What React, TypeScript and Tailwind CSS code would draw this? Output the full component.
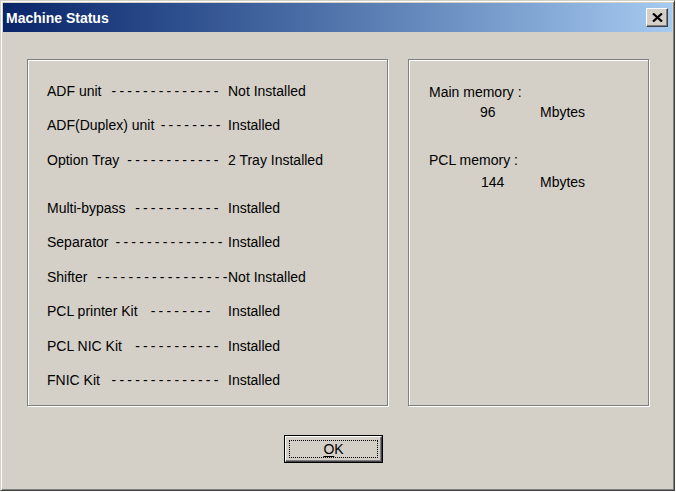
const FONT = "font-['Liberation_Sans',Arial,sans-serif]"

type Row = { label: string; dashes: number; pr: string; value: string; gap?: boolean }

const rows: Row[] = [
  { label: "ADF unit", dashes: 14, pr: "pr-[10px]", value: "Not Installed" },
  { label: "ADF(Duplex) unit", dashes: 8, pr: "pr-[8px]", value: "Installed" },
  { label: "Option Tray", dashes: 12, pr: "pr-[10px]", value: "2 Tray Installed" },
  { label: "Multi-bypass", dashes: 11, pr: "pr-[10px]", value: "Installed", gap: true },
  { label: "Separator", dashes: 14, pr: "pr-[6px]", value: "Installed" },
  { label: "Shifter", dashes: 17, pr: "pr-[1px]", value: "Not Installed" },
  { label: "PCL printer Kit", dashes: 8, pr: "pr-[18px]", value: "Installed" },
  { label: "PCL NIC Kit", dashes: 11, pr: "pr-[10px]", value: "Installed" },
  { label: "FNIC Kit", dashes: 14, pr: "pr-[10px]", value: "Installed" },
]

const etched = "border border-[#808080] shadow-[inset_1px_1px_0_#fff,1px_1px_0_#fff]"

export default function App() {
  return (
    <div className={`w-[676px] h-[492px] bg-white ${FONT}`}>
      <div className="w-[675px] h-[491px] bg-[#d4d0c8] border border-t-[#d4d0c8] border-l-[#d4d0c8] border-r-[#404040] border-b-[#404040] shadow-[inset_1px_1px_0_#fff,inset_-1px_-1px_0_#808080] p-[2px] flex flex-col">
        {/* title bar */}
        <div className="h-[29px] flex items-center justify-between bg-gradient-to-r from-[#0a246a] to-[#a6caf0] pl-[3px] pr-[4px]">
          <span className="text-white font-bold text-[14px] leading-none">Machine Status</span>
          <div className="w-[22px] h-[19px] bg-[#d4d0c8] border border-t-white border-l-white border-r-[#404040] border-b-[#404040] shadow-[inset_-1px_-1px_0_#808080] flex items-center justify-center">
            <svg width="11" height="9" viewBox="0 0 11 9">
              <path d="M1 0.5 L10 8.5 M10 0.5 L1 8.5" stroke="#000" strokeWidth="2.2" />
            </svg>
          </div>
        </div>

        {/* panels */}
        <div className="flex gap-[20px] pl-[24px] pt-[27px]">
          <div className={`w-[361px] h-[347px] ${etched} pl-[19px] pt-[14px] text-[14px] text-black`}>
            {rows.map(r => (
              <div key={r.label} className={`flex items-center h-[34.5px] ${r.gap ? "mt-[13.5px]" : ""}`}>
                <div className={`w-[181px] flex justify-between ${r.pr}`}>
                  <span>{r.label}</span>
                  <span className="tracking-[-0.35px]">{Array(r.dashes).fill("-").join(" ")}</span>
                </div>
                <span>{r.value}</span>
              </div>
            ))}
          </div>

          <div className={`w-[241px] h-[347px] ${etched} pl-[20px] pt-[22px] text-[14px] leading-[20px] text-black`}>
            <div>Main memory :</div>
            <div className="flex">
              <span className="w-[111px] pl-[51px]">96</span>
              <span>Mbytes</span>
            </div>
            <div className="mt-[28px]">PCL memory :</div>
            <div className="flex mt-[2px]">
              <span className="w-[111px] pl-[52px]">144</span>
              <span>Mbytes</span>
            </div>
          </div>
        </div>

        {/* OK button */}
        <div className="pl-[281px] pt-[29px]">
          <button className="w-[99px] h-[28px] border border-black bg-[#d4d0c8] p-0">
            <div className="w-full h-full border border-t-white border-l-white border-r-[#404040] border-b-[#404040] shadow-[inset_-1px_-1px_0_#808080] p-[3px]">
              <div className="w-full h-full border border-dotted border-black flex items-center justify-center text-[14px] leading-none text-black">
                <span><span className="underline underline-offset-2">O</span>K</span>
              </div>
            </div>
          </button>
        </div>
      </div>
    </div>
  )
}
